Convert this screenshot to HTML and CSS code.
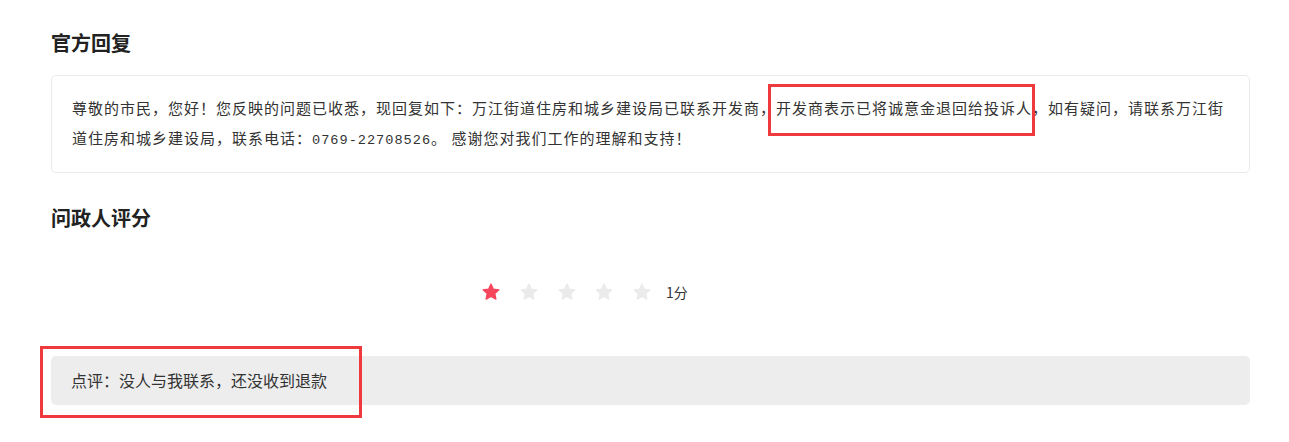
FILE: index.html
```html
<!DOCTYPE html>
<html lang="zh">
<head>
<meta charset="utf-8">
<title>官方回复</title>
<link rel="stylesheet" href="styles.css">
</head>
<body>
<div class="page">
  <h2 class="title">官方回复</h2>
  <div class="reply">尊敬的市民，您好！您反映的问题已收悉，现回复如下：万江街道住房和城乡建设局已联系开发商，<span class="mark">开发商表示已将诚意金退回给投诉人</span>，如有疑问，请联系万江街道住房和城乡建设局，联系电话：<span class="phone">0769-22708526</span>。 感谢您对我们工作的理解和支持！</div>

  <h2 class="title title-rate">问政人评分</h2>
  <div class="rate">
    <svg class="star on" viewBox="0 0 24 24"><path d="M12 2.5l2.9 6.1 6.6.8-4.9 4.6 1.3 6.6L12 17.3l-5.9 3.3 1.3-6.6-4.9-4.6 6.6-.8z"/></svg>
    <svg class="star" viewBox="0 0 24 24"><path d="M12 2.5l2.9 6.1 6.6.8-4.9 4.6 1.3 6.6L12 17.3l-5.9 3.3 1.3-6.6-4.9-4.6 6.6-.8z"/></svg>
    <svg class="star" viewBox="0 0 24 24"><path d="M12 2.5l2.9 6.1 6.6.8-4.9 4.6 1.3 6.6L12 17.3l-5.9 3.3 1.3-6.6-4.9-4.6 6.6-.8z"/></svg>
    <svg class="star" viewBox="0 0 24 24"><path d="M12 2.5l2.9 6.1 6.6.8-4.9 4.6 1.3 6.6L12 17.3l-5.9 3.3 1.3-6.6-4.9-4.6 6.6-.8z"/></svg>
    <svg class="star" viewBox="0 0 24 24"><path d="M12 2.5l2.9 6.1 6.6.8-4.9 4.6 1.3 6.6L12 17.3l-5.9 3.3 1.3-6.6-4.9-4.6 6.6-.8z"/></svg>
    <span class="score">1分</span>
  </div>

  <div class="comment">点评：没人与我联系，还没收到退款</div>
</div>
</body>
</html>
```
FILE: styles.css
```css
html, body {
  margin: 0;
  padding: 0;
  background: #ffffff;
}
body {
  font-family: "Noto Sans CJK SC", "Noto Sans", sans-serif;
  color: #333333;
}
.page {
  width: 1199px;
  padding: 29px 0 40px 51px;
}
.title {
  margin: 0;
  font-size: 20px;
  line-height: 28px;
  font-weight: 700;
  color: #222222;
}
.reply {
  margin-top: 18px;
  border: 1px solid #ebebeb;
  border-radius: 5px;
  padding: 17px 20px 19px 20px;
  font-size: 15px;
  letter-spacing: 1px;
  line-height: 30px;
  color: #333333;
}
.phone {
  font-family: "Liberation Mono", monospace;
  font-size: 13.6px;
  line-height: 10px;
}
.mark {
  position: relative;
}
.mark::after {
  content: "";
  position: absolute;
  left: -8px;
  right: -3px;
  top: -13px;
  bottom: -18px;
  border: 3px solid #ef3a3d;
}
.title-rate {
  margin-top: 31px;
}
.rate {
  margin-top: 50px;
  height: 20px;
  display: flex;
  align-items: center;
  padding-left: 430px;
}
.star {
  width: 20px;
  height: 20px;
  margin-right: 17.75px;
  fill: #ebebeb;
  stroke: #ebebeb;
  stroke-width: 1.5;
  stroke-linejoin: round;
}
.star.on {
  fill: #f5465d;
  stroke: #f5465d;
}
.star:nth-of-type(5) {
  margin-right: 14px;
}
.score {
  font-size: 14px;
  color: #333333;
}
.comment {
  position: relative;
  margin-top: 54px;
  height: 49px;
  line-height: 49px;
  padding: 0 20px;
  background: #ededed;
  border-radius: 5px;
  font-size: 16px;
  color: #333333;
}
.comment::after {
  content: "";
  position: absolute;
  left: -11px;
  top: -10px;
  width: 316px;
  height: 66px;
  border: 3px solid #ef3a3d;
}
```
